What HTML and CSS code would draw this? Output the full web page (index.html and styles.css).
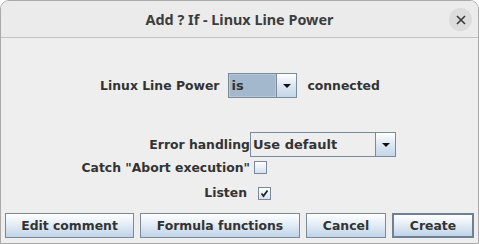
FILE: index.html
```html
<!DOCTYPE HTML>
<html>
<head>
<meta name="viewport" content="width=device-width, initial-scale=1">
<link rel="stylesheet" href="styles.css">
</head>
<body>
    <div class="window">
        <div class="titlebar">
            <span class="title">Add ? If - Linux Line Power</span>
            <span class="close">
                <svg width="10" height="10" viewBox="0 0 10 10"><path d="M1 1 L9 9 M9 1 L1 9" stroke="#3a3a3a" stroke-width="1.6"/></svg>
            </span>
        </div>
        <div class="content">
            <div class="condition">
                <span class="label">Linux Line Power</span>
                <div class="combo small">
                    <span class="value selected">is</span>
                    <span class="arrow"></span>
                </div>
                <span class="label">connected</span>
            </div>
            <div class="options">
                <span class="label right">Error handling</span>
                <div class="combo wide">
                    <span class="value">Use default</span>
                    <span class="arrow"></span>
                </div>
                <span class="label right">Catch "Abort execution"</span>
                <span class="check catch"></span>
                <span class="label right listen">Listen</span>
                <span class="check listen-box">
                    <svg width="11" height="11" viewBox="0 0 11 11"><path d="M2.5 5.5 L4.5 8 L8.5 2.5" stroke="#222" stroke-width="1.8" fill="none"/></svg>
                </span>
            </div>
            <div class="buttons">
                <button class="btn edit">Edit comment</button>
                <button class="btn formula">Formula functions</button>
                <button class="btn cancel">Cancel</button>
                <button class="btn create">Create</button>
            </div>
        </div>
    </div>
</body>
</html>
```

FILE: styles.css
```css
* {
    box-sizing: border-box;
}
body {
    margin: 0;
    background-color: #ffffff;
    font-family: "DejaVu Sans", sans-serif;
}
/* The dialog frame */
.window {
    width: 479px;
    height: 244px;
    border: 1px solid #a9a9a9;
    border-radius: 9px 9px 0 0;
    background-color: #eeeeee;
    overflow: hidden;
}
.titlebar {
    position: relative;
    height: 37px;
    background-color: #ebebeb;
    border-bottom: 1px solid #c2c2c2;
    display: flex;
    align-items: center;
    justify-content: center;
}
.title {
    font-family: "Noto Sans", sans-serif;
    font-weight: bold;
    font-size: 14.4px;
    color: #3d3d3d;
    margin-top: 1px;
}
/* Close button sits over the title bar */
.close {
    position: absolute;
    left: 448px;
    top: 7px;
    width: 23px;
    height: 23px;
    border-radius: 50%;
    background-color: #dcdcdc;
    display: flex;
    align-items: center;
    justify-content: center;
}
.content {
    font-size: 12.4px;
    font-weight: bold;
    color: #333333;
}
.label {
    white-space: nowrap;
}
/* First row: the condition */
.condition {
    display: flex;
    align-items: center;
    justify-content: center;
    gap: 9px;
    margin-top: 35px;
    height: 25px;
    padding-left: 1px;
}
.combo {
    display: flex;
    height: 25px;
    border: 1px solid #7a8a99;
}
.combo.small {
    width: 69px;
    margin-right: 1px;
}
.combo.wide {
    width: 146px;
    height: 25px;
}
.value {
    flex: 1;
    display: flex;
    align-items: center;
    padding-left: 2px;
    font-size: 13px;
    background-color: #eeeeee;
}
.value.selected {
    background-color: #a3b8cc;
    border: 1px solid #b5c8db;
    padding-left: 1px;
}
.arrow {
    width: 20px;
    border-left: 1px solid #7a8a99;
    background: linear-gradient(#ffffff, #dce7f2 50%, #c4d6e8);
    display: flex;
    align-items: center;
    justify-content: center;
}
.arrow::after {
    content: '';
    border-style: solid;
    border-width: 4px 4px 0 4px;
    border-color: #111111 transparent transparent transparent;
    margin-top: 1px;
}
/* Option rows, labels line up on one edge */
.options {
    display: grid;
    grid-template-columns: 249px auto;
    grid-template-rows: 25px 20px 25px;
    align-items: center;
    justify-items: start;
    margin-top: 34px;
}
.right {
    justify-self: end;
}
.label.listen {
    padding-right: 3px;
    margin-top: 6px;
}
.check {
    width: 13px;
    height: 13px;
    border: 1px solid #7a8a99;
    background: linear-gradient(#ffffff, #d4e1ee);
    display: flex;
    align-items: center;
    justify-content: center;
}
.check.catch {
    margin-left: 4px;
    margin-top: 1px;
}
.check.listen-box {
    margin-left: 8px;
    margin-top: 7px;
}
/* Bottom button row */
.buttons {
    display: flex;
    gap: 6px;
    margin-top: 11px;
    padding-left: 4px;
}
.btn {
    height: 25px;
    font-family: "DejaVu Sans", sans-serif;
    font-size: 12.4px;
    font-weight: bold;
    color: #333333;
    border: 1px solid #7a8a99;
    background: linear-gradient(#ffffff, #e4edf6 45%, #bfd3e7);
    padding: 0;
}
.edit {
    width: 129px;
}
.formula {
    width: 160px;
}
.cancel {
    width: 80px;
}
.create {
    width: 82px;
    border: 2px solid #6d8094;
}
```
